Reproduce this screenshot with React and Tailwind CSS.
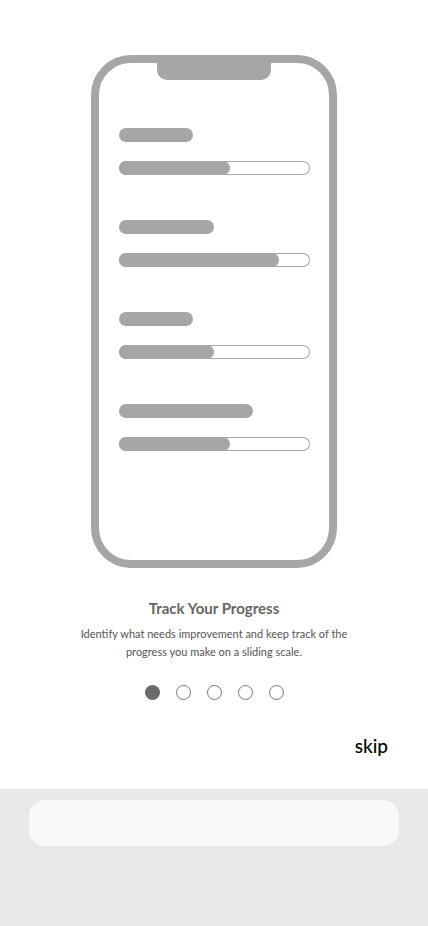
const rows = [
  { label: 74, fill: 111 },
  { label: 95, fill: 160 },
  { label: 74, fill: 95 },
  { label: 134, fill: 111 },
];

const App = () => {
  return (
    <div
      className="w-[428px] h-[926px] flex flex-col bg-white"
      style={{ fontFamily: "Lato, 'Open Sans', sans-serif" }}
    >
      <div className="h-[789px] flex flex-col items-center">
        {/* phone frame */}
        <div className="relative mt-[55px] w-[246px] h-[513px] border-[8px] border-[#a6a6a6] rounded-[40px]">
          <div className="absolute top-[-1px] left-[58px] w-[114px] h-[18px] bg-[#a6a6a6] rounded-b-[10px]"></div>
          <div className="flex flex-col pl-[20px] pt-[65px] gap-[45px]">
            {rows.map((r, i) => (
              <div key={i} className="flex flex-col gap-[19px]">
                <div
                  className="h-[14px] rounded-full bg-[#a6a6a6]"
                  style={{ width: r.label }}
                ></div>
                <div className="w-[191px] h-[14px] rounded-full shadow-[inset_0_0_0_1px_#a6a6a6]">
                  <div
                    className="h-full rounded-full bg-[#a6a6a6]"
                    style={{ width: r.fill }}
                  ></div>
                </div>
              </div>
            ))}
          </div>
        </div>

        <h1 className="mt-[30px] text-[15px] leading-[20px] font-bold text-[#666666] text-center">
          Track Your Progress
        </h1>
        <p className="mt-[7px] w-[270px] text-[11px] leading-[18px] text-[#555555] text-center">
          Identify what needs improvement and keep track of the progress you make
          on a sliding scale.
        </p>

        <div className="mt-[24px] flex gap-[16px]">
          <div className="w-[15px] h-[15px] rounded-full bg-[#6b6b6b]"></div>
          <div className="w-[15px] h-[15px] rounded-full border border-[#777777]"></div>
          <div className="w-[15px] h-[15px] rounded-full border border-[#777777]"></div>
          <div className="w-[15px] h-[15px] rounded-full border border-[#777777]"></div>
          <div className="w-[15px] h-[15px] rounded-full border border-[#777777]"></div>
        </div>

        <div className="w-full flex justify-end pr-[40px] mt-[34px]">
          <span className="text-[19px] leading-[24px] font-medium text-black">skip</span>
        </div>
      </div>

      {/* bottom area */}
      <div className="flex-1 bg-[#e9e8e6] px-[29px] pt-[11px]">
        <div className="h-[46px] rounded-[16px] bg-[#faf9f7]"></div>
      </div>
    </div>
  );
};

export default App;
